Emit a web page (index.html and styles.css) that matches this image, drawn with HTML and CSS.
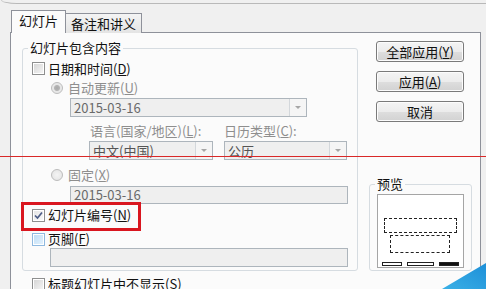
FILE: index.html
```html
<!DOCTYPE html>
<html lang="zh">
<head>
<meta charset="utf-8">
<link rel="stylesheet" href="styles.css">
</head>
<body>
<div class="frame"></div>
<div class="tabs">
  <div class="tab active">幻灯片</div>
  <div class="tab">备注和讲义</div>
</div>
<div class="panel">
  <div class="left">
    <fieldset class="group main">
      <legend>幻灯片包含内容</legend>
      <div class="row r1"><span class="cb"></span><span>日期和时间(<u>D</u>)</span></div>
      <div class="row r2 dis"><span class="radio on"></span><span>自动更新(<u>U</u>)</span></div>
      <div class="field f1"><span class="val">2015-03-16</span><span class="arrow"></span></div>
      <div class="row labels dis"><span class="l1">语言(国家/地区)(<u>L</u>):</span><span>日历类型(<u>C</u>):</span></div>
      <div class="combos">
        <div class="field c1"><span class="val dark">中文(中国)</span><span class="arrow"></span></div>
        <div class="field c2"><span class="val dark">公历</span><span class="arrow"></span></div>
      </div>
      <div class="row r3 dis"><span class="radio"></span><span>固定(<u>X</u>)</span></div>
      <div class="field f2"><span class="val">2015-03-16</span></div>
      <div class="row r4"><span class="cb checked"><svg width="11" height="11" viewBox="0 0 11 11"><path d="M2 5.5 L4.5 8 L9 2.5" fill="none" stroke="#4d5d86" stroke-width="1.7"/></svg></span><span>幻灯片编号(<u>N</u>)</span></div>
      <div class="row r5"><span class="cb hover"></span><span>页脚(<u>F</u>)</span></div>
      <div class="field f3"><span class="val"></span></div>
    </fieldset>
    <div class="row r6"><span class="cb"></span><span>标题幻灯片中不显示(<u>S</u>)</span></div>
  </div>
  <div class="right">
    <div class="btn">全部应用(<u>Y</u>)</div>
    <div class="btn">应用(<u>A</u>)</div>
    <div class="btn">取消</div>
    <fieldset class="group preview">
      <legend>预览</legend>
      <div class="pbox">
        <div class="dash d1"></div>
        <div class="dash d2"></div>
        <div class="bars"><span class="bar b1"></span><span class="bar b2"></span><span class="bar b3"></span></div>
      </div>
    </fieldset>
  </div>
</div>
<div class="redline"></div>
<div class="redbox"></div>
<svg class="corner" width="44" height="27" viewBox="0 0 44 27">
  <defs>
    <linearGradient id="bg" x1="0" y1="1" x2="1" y2="0">
      <stop offset="0" stop-color="#3bb0e6"/>
      <stop offset="1" stop-color="#1d8fd8"/>
    </linearGradient>
  </defs>
  <polygon points="0,27 44,1 44,27" fill="url(#bg)"/>
</svg>
</body>
</html>
```
FILE: styles.css
```css
* { box-sizing: border-box; }
html, body { margin: 0; padding: 0; }
body {
  width: 486px;
  height: 289px;
  overflow: hidden;
  position: relative;
  background: #f0f0f0;
  font-family: "Noto Sans CJK SC", "Noto Sans", sans-serif;
  font-size: 13px;
  color: #111;
}
u { text-decoration-thickness: 1px; text-underline-offset: 1px; }

.frame {
  height: 4px;
  margin-left: 1px;
  border-bottom: 1px solid #b9b9b9;
  border-left: 1px solid #c9c9c9;
  border-bottom-left-radius: 16px 4px;
}

.tabs {
  display: flex;
  align-items: flex-end;
  height: 23px;
  margin: 6px 0 -1px 11px;
  position: relative;
  z-index: 1;
}
.tab {
  height: 20px;
  width: 76px;
  padding-top: 2px;
  line-height: 16px;
  text-align: center;
  border: 1px solid #8e919a;
  border-bottom: none;
  border-left: none;
  background: linear-gradient(#f4f4f4, #e4e4e4);
}
.tab.active {
  height: 23px;
  width: 55px;
  border-left: 1px solid #8e919a;
  background: #fbfbfb;
}

.panel {
  margin-left: 10px;
  width: 471px;
  height: 257px;
  overflow: hidden;
  border: 1px solid #8e919a;
  border-bottom: none;
  background: #fbfbfb;
  display: flex;
  align-items: flex-start;
}

.left { margin-left: 11px; width: 336px; }
.group {
  margin: 0;
  padding: 0;
  min-width: 0;
  border: 1px solid #d6dce1;
  border-radius: 3px;
}
.group legend {
  margin-left: 5px;
  padding: 0 2px;
  line-height: 16px;
  height: 16px;
}
.main { margin-top: 7px; width: 336px; padding-bottom: 3px; }

.row { display: flex; align-items: center; height: 16px; line-height: 16px; }
.dis { color: #8e8e8e; }

.cb {
  width: 13px;
  height: 13px;
  flex: none;
  margin-right: 3px;
  border: 1px solid #8e8f8f;
  background: linear-gradient(135deg, #d3d3d3, #f7f7f7);
  box-shadow: inset 0 0 0 1px #fff;
  display: flex;
  align-items: center;
  justify-content: center;
}
.cb.checked { background: linear-gradient(135deg, #e4e4e4, #fbfbfb); }
.cb.hover {
  border-color: #8fb9e0;
  background: linear-gradient(135deg, #bcdcf6, #e6f3fd);
}
.cb svg { display: block; }

.radio {
  width: 12px;
  height: 12px;
  flex: none;
  margin-right: 5px;
  border: 1px solid #bcbcbc;
  border-radius: 50%;
  background: radial-gradient(circle, #f4f4f4 0, #e2e2e2 100%);
}
.radio.on {
  background: radial-gradient(circle, #a9a9a9 0, #b4b4b4 2.5px, #e6e6e6 3.5px, #f0f0f0 100%);
}

.r1 { margin-top: 4px; height: 17px; padding-left: 9px; }
.r2 { margin-top: 3px; padding-left: 28px; }
.labels { margin-top: 6px; padding-left: 67px; }
.l1 { width: 134px; }
.r3 { margin-top: 7px; padding-left: 28px; }
.r4 { margin-top: 3px; padding-left: 9px; }
.r5 { margin-top: 8px; padding-left: 9px; }
.r6 { margin-top: 5px; padding-left: 10px; }

.field {
  display: flex;
  align-items: center;
  height: 19px;
  border: 1px solid #adb5bc;
  background: #efefef;
  color: #6a6a6a;
  padding-left: 3px;
  line-height: 16px;
}
.field .val { flex: 1; white-space: nowrap; }
.field .val.dark { color: #555; }
.field .arrow {
  width: 17px;
  height: 100%;
  flex: none;
  border-left: 1px solid #d3d7db;
  background: #f5f5f5;
  display: flex;
  align-items: center;
  justify-content: center;
}
.field .arrow::after {
  content: "";
  width: 0;
  height: 0;
  border-left: 3px solid transparent;
  border-right: 3px solid transparent;
  border-top: 3px solid #a6a6a6;
}
.f1 { margin: 2px 0 0 47px; width: 237px; }
.combos { display: flex; gap: 11px; margin: 2px 0 0 66px; }
.c1 { width: 124px; }
.c2 { width: 123px; }
.f2 { margin: 3px 0 0 47px; width: 278px; height: 18px; }
.f3 { margin: 1px 0 0 27px; width: 298px; }

.right { margin: 8px 0 0 11px; width: 103px; }
.btn {
  margin-left: 7px;
  width: 88px;
  height: 21px;
  line-height: 19px;
  text-align: center;
  border: 1px solid #7a7a7a;
  border-radius: 3px;
  background: linear-gradient(#f4f4f4 0%, #ececec 50%, #dedede 51%, #d2d2d2 100%);
  box-shadow: inset 0 0 0 1px #fcfcfc;
  color: #111;
}
.btn + .btn { margin-top: 9px; }

.preview { margin-top: 54px; width: 103px; padding-bottom: 2px; }
.pbox {
  margin: 2px 0 0 7px;
  width: 87px;
  height: 74px;
  border: 1px solid #a5a5a5;
  background: #fff;
  padding-top: 23px;
}
.dash { border: 1px dashed #222; }
.d1 { margin-left: 6px; width: 73px; height: 15px; }
.d2 { margin: 2px 0 0 12px; width: 60px; height: 18px; }
.bars { display: flex; gap: 5px; margin: 9px 0 0 4px; }
.bar { height: 4px; border: 1px solid #222; }
.b1 { width: 20px; }
.b2 { width: 27px; }
.b3 { width: 20px; background: #111; }

.redline {
  position: absolute;
  left: 0;
  top: 156px;
  width: 486px;
  height: 1px;
  background: #d92828;
}
.redbox {
  position: absolute;
  left: 21px;
  top: 202px;
  width: 120px;
  height: 29px;
  border: 3px solid #d9161f;
}
.corner { position: absolute; right: 0; bottom: 0; display: block; }
```
